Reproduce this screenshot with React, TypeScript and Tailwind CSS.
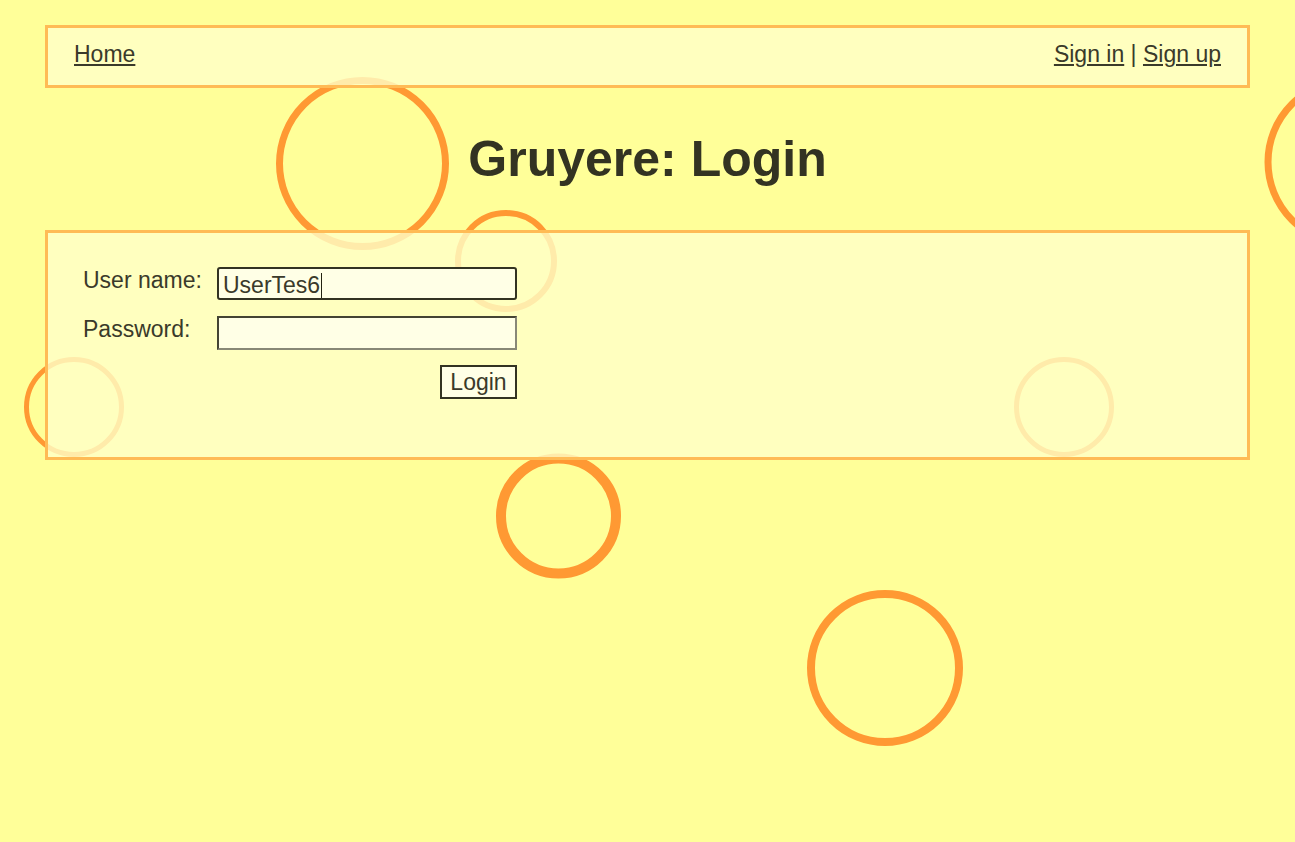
import React from "react";

const circles = [
  { cx: 362.5, cy: 163.5, r: 83, w: 7 },
  { cx: 506, cy: 261, r: 48, w: 6 },
  { cx: 1350, cy: 162, r: 82, w: 7 },
  { cx: 74, cy: 407, r: 47.5, w: 5 },
  { cx: 558.5, cy: 516, r: 57.5, w: 10 },
  { cx: 885, cy: 668, r: 74, w: 8 },
  { cx: 1064, cy: 407, r: 47.5, w: 5 },
  { cx: 362, cy: 904, r: 58, w: 7 },
];

export default function App() {
  return (
    <div
      className="relative min-h-[842px] w-full overflow-hidden bg-[#ffff99] text-[#333322]"
      style={{ fontFamily: '"Liberation Sans", Arial, sans-serif' }}
    >
      <svg
        className="pointer-events-none absolute left-0 top-0"
        width="1295"
        height="842"
        viewBox="0 0 1295 842"
      >
        {circles.map((c, i) => (
          <circle
            key={i}
            cx={c.cx}
            cy={c.cy}
            r={c.r}
            fill="none"
            stroke="#ff9933"
            strokeWidth={c.w}
          />
        ))}
      </svg>

      <div className="relative px-[45px] pt-[25px]">
        <div className="flex h-[63px] items-center justify-between border-[3px] border-[#ffbb55] bg-[#ffffc8]/80 px-[26px] pb-[4px] text-[23px] text-[#3a3a2a]">
          <a href="#" className="underline">Home</a>
          <div>
            <a href="#" className="underline">Sign in</a>
            <span> | </span>
            <a href="#" className="underline">Sign up</a>
          </div>
        </div>

        <h1 className="mt-[42px] h-[58px] text-center text-[50px] font-bold leading-[58px]">
          Gruyere: Login
        </h1>

        <div className="mt-[42px] h-[230px] border-[3px] border-[#ffbb55] bg-[#ffffc8]/80 pl-[35px] pt-[34px] text-[23px] text-[#3a3a2a]">
          <div className="flex flex-col gap-[16px]">
            <div className="flex items-start">
              <div className="w-[134px] leading-[26px]">User name:</div>
              <div className="flex h-[33px] w-[300px] items-center rounded-[3px] border-2 border-[#333322] bg-[#ffffe6] pl-[4px] pt-[3px] leading-none">
                <span>UserTes6</span>
                <span className="ml-px inline-block h-[25px] w-px bg-[#222211]" />
              </div>
            </div>
            <div className="flex items-start">
              <div className="w-[134px] leading-[26px]">Password:</div>
              <div className="h-[34px] w-[300px] border-2 border-b-[#888877] border-l-[#444433] border-r-[#888877] border-t-[#444433] bg-[#ffffe6]" />
            </div>
          </div>
          <div className="mt-[15px] flex w-[434px] justify-end">
            <button className="h-[34px] w-[77px] border-2 border-[#333322] bg-[#ffffe6] text-[23px] leading-none">
              Login
            </button>
          </div>
        </div>
      </div>
    </div>
  );
}
